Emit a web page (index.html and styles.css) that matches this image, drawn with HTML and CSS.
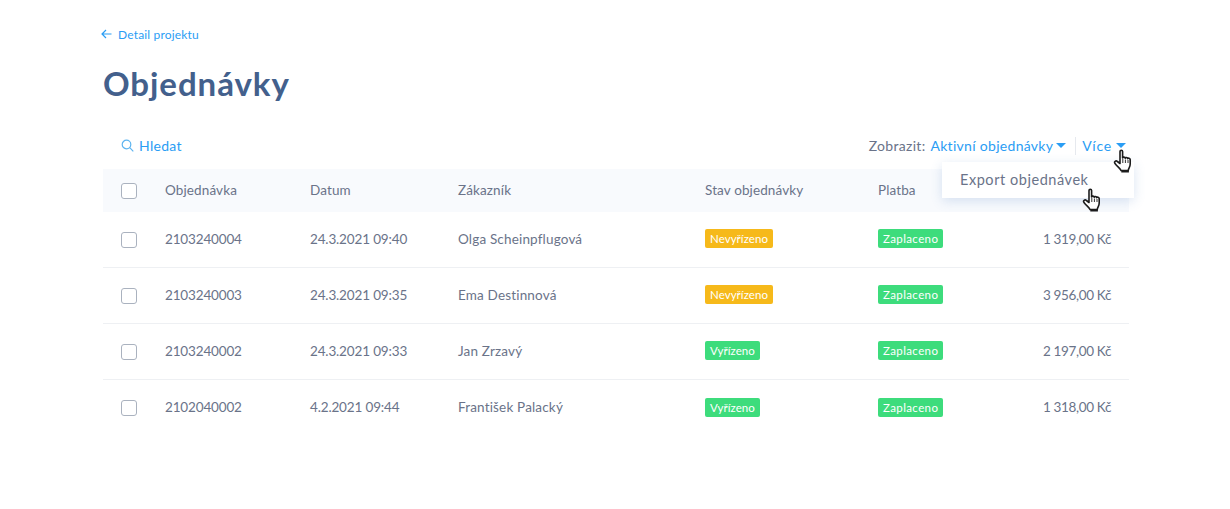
FILE: index.html
```html
<!DOCTYPE html>
<html lang="cs">
<head>
<meta charset="utf-8">
<title>Objednávky</title>
<link rel="stylesheet" href="styles.css">
</head>
<body>
<main class="page">
  <a class="back" href="#"><svg class="back-icon" width="11" height="10" viewBox="0 0 11 10"><path d="M10.5 5H1M5 1 1 5l4 4" fill="none" stroke="#2a9df4" stroke-width="1.2"/></svg>Detail projektu</a>
  <h1 class="title">Objednávky</h1>
  <div class="toolbar">
    <a class="search" href="#"><svg width="13" height="13" viewBox="0 0 13 13"><circle cx="5.5" cy="5.5" r="4.3" fill="none" stroke="#5db4f0" stroke-width="1.2"/><path d="m8.7 8.7 3.6 3.6" stroke="#5db4f0" stroke-width="1.2"/></svg>Hledat</a>
    <div class="filters">
      <span class="label">Zobrazit:</span>
      <a class="link" href="#">Aktivní objednávky<i class="caret"></i></a>
      <span class="sep"></span>
      <a class="link more" href="#">Více<i class="caret"></i></a>
    </div>
    <div class="menu">Export objednávek</div>
    <svg class="hand hand-top" width="20" height="24" viewBox="0 0 20 24"><use href="#hand"/></svg>
    <svg class="hand hand-bottom" width="20" height="24" viewBox="0 0 20 24"><use href="#hand"/></svg>
  </div>
  <div class="row head">
    <span class="check"></span><span>Objednávka</span><span>Datum</span><span>Zákazník</span><span>Stav objednávky</span><span>Platba</span><span></span>
  </div>
  <div class="row">
    <span class="check"></span><span class="num">2103240004</span><span class="num">24.3.2021 09:40</span><span>Olga Scheinpflugová</span><span><b class="tag state warn">Nevyřízeno</b></span><span><b class="tag ok">Zaplaceno</b></span><span class="price">1 319,00 Kč</span>
  </div>
  <div class="row">
    <span class="check"></span><span class="num">2103240003</span><span class="num">24.3.2021 09:35</span><span>Ema Destinnová</span><span><b class="tag state warn">Nevyřízeno</b></span><span><b class="tag ok">Zaplaceno</b></span><span class="price">3 956,00 Kč</span>
  </div>
  <div class="row">
    <span class="check"></span><span class="num">2103240002</span><span class="num">24.3.2021 09:33</span><span>Jan Zrzavý</span><span><b class="tag state ok">Vyřízeno</b></span><span><b class="tag ok">Zaplaceno</b></span><span class="price">2 197,00 Kč</span>
  </div>
  <div class="row last">
    <span class="check"></span><span class="num">2102040002</span><span class="num">4.2.2021 09:44</span><span>František Palacký</span><span><b class="tag state ok">Vyřízeno</b></span><span><b class="tag ok">Zaplaceno</b></span><span class="price">1 318,00 Kč</span>
  </div>
</main>
<svg class="defs" width="0" height="0"><defs><g id="hand"><path d="M7 2.500c0-1.600 2.600-1.600 2.600 0V9c.3-1.200 2.400-1.200 2.600.2.300-1 2.300-1 2.500.4.400-.9 2.400-.6 2.500 1v4.400c0 3-1.500 4-2 6.500H8c-1-2.500-3.500-3.500-6-7-1.300-1.800.9-3.400 2.400-2L7 14.500z" fill="#fff" stroke="#1c1c1c" stroke-width="1.600" stroke-linejoin="round"/><path d="M9.800 10v4M12.400 10.500v3.500M15 11v3" stroke="#333" stroke-width="1"/><path d="M8.300 22.500h7.600" stroke="#1c1c1c" stroke-width="2"/></g></defs></svg>
</body>
</html>
```
FILE: styles.css
```css
* { box-sizing: border-box; }
html, body { margin: 0; background: #fff; }
body { font-family: Lato, "Open Sans", sans-serif; color: #6a7389; overflow: hidden; height: 509px; }
a { text-decoration: none; color: #2a9df4; }
.page { width: 1026px; margin-left: 103px; padding-top: 26px; }
.back { display: flex; align-items: center; gap: 6px; height: 16px; font-size: 12px; margin-left: -2px; letter-spacing: .17px; }
.title { margin: 18px 0 0; height: 50px; font-size: 33px; line-height: 46px; font-weight: 700; color: #43608c; letter-spacing: .95px; }
.toolbar { position: relative; display: flex; justify-content: space-between; align-items: center; height: 47px; margin-top: 12px; padding: 0 3px 0 18px; font-size: 14px; }
.search { display: flex; align-items: center; gap: 5px; letter-spacing: .3px; }
.filters { display: flex; align-items: center; letter-spacing: .3px; }
.label { margin-right: 5px; }
.link { display: inline-flex; align-items: center; }
.more { letter-spacing: .8px; }
.caret { width: 0; height: 0; margin-left: 3px; border: 5px solid transparent; border-top: 5px solid #2a9df4; border-bottom: 0; }
.more .caret { margin-left: 4px; }
.sep { width: 1px; height: 18px; margin: 0 6px 0 9px; background: #e6e9ee; }
.menu { position: absolute; z-index: 2; top: 40px; right: -5px; width: 192px; height: 36px; padding-left: 18px; font-size: 14.5px; line-height: 36px; background: #fff; box-shadow: 0 3px 12px rgba(70, 120, 190, .2); letter-spacing: .55px; }
.hand { position: absolute; z-index: 3; }
.hand-top { top: 27px; right: -4px; }
.hand-bottom { top: 66px; right: 27px; }
.defs { position: absolute; }
.row { display: grid; grid-template-columns: 44px 145px 148px 247px 173px 1fr auto; align-items: center; height: 56px; padding: 0 18px; border-bottom: 1px solid #eef0f3; font-size: 13.5px; letter-spacing: .17px; }
.row > span:not(.check) { padding-bottom: 2px; }
.row.head { height: 43px; background: #f8fafd; border-bottom: 0; letter-spacing: .12px; }
.row.last { border-bottom: 0; }
.check { display: block; width: 16px; height: 16px; background: #fff; border: 1px solid #aab2bf; border-radius: 3px; }
.num { letter-spacing: -.15px; }
.price { text-align: right; letter-spacing: -.35px; }
.tag { display: inline-block; height: 19px; padding: 0 5px; border-radius: 2px; font-size: 11.5px; font-weight: 400; line-height: 19px; color: #fff; letter-spacing: .38px; vertical-align: middle; }
.state { letter-spacing: .05px; }
.warn { background: #f6b91a; }
.ok { background: #3ddc7c; }
```
